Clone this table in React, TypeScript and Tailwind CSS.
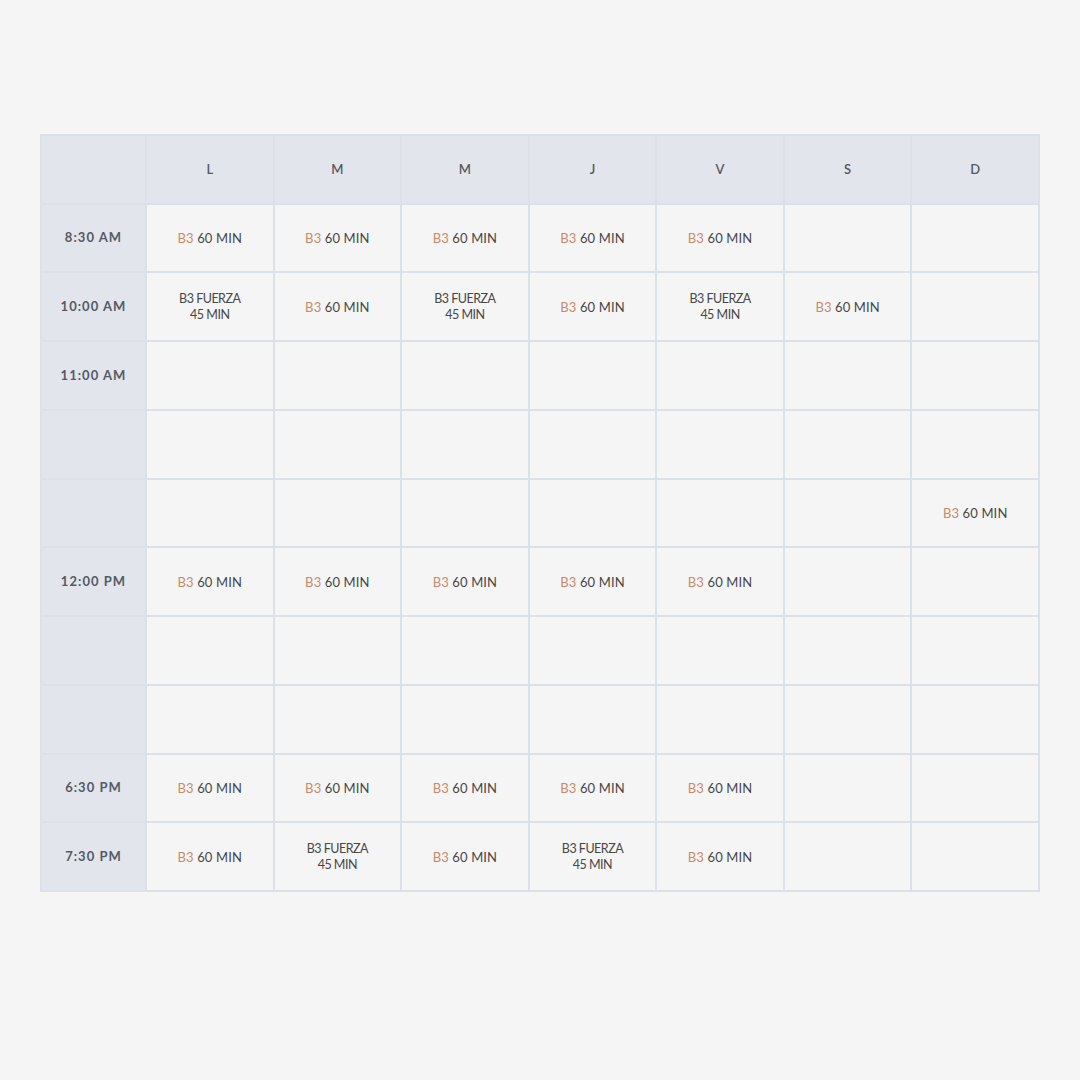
import React from "react";

type Slot = "60" | "F" | null;

const days = ["L", "M", "M", "J", "V", "S", "D"];

const rows: { time: string; slots: Slot[] }[] = [
  { time: "8:30 AM", slots: ["60", "60", "60", "60", "60", null, null] },
  { time: "10:00 AM", slots: ["F", "60", "F", "60", "F", "60", null] },
  { time: "11:00 AM", slots: [null, null, null, null, null, null, null] },
  { time: "", slots: [null, null, null, null, null, null, null] },
  { time: "", slots: [null, null, null, null, null, null, "60"] },
  { time: "12:00 PM", slots: ["60", "60", "60", "60", "60", null, null] },
  { time: "", slots: [null, null, null, null, null, null, null] },
  { time: "", slots: [null, null, null, null, null, null, null] },
  { time: "6:30 PM", slots: ["60", "60", "60", "60", "60", null, null] },
  { time: "7:30 PM", slots: ["60", "F", "60", "F", "60", null, null] },
];

function ClassCell({ slot }: { slot: Slot }) {
  return (
    <div className="flex items-center justify-center bg-[#f5f5f5] text-center text-[13px] leading-[16px] text-[#474747]">
      {slot === "60" && (
        <span className="tracking-[0.01em]">
          <span className="text-[#c98a6c]">B3</span> 60 MIN
        </span>
      )}
      {slot === "F" && (
        <span className="text-[12.5px] leading-[16px] tracking-[-0.04em]">
          B3 FUERZA
          <br />
          45 MIN
        </span>
      )}
    </div>
  );
}

export default function App() {
  return (
    <div
      className="min-h-screen bg-[#f5f5f5] pt-[134px]"
      style={{ fontFamily: "Lato, 'Noto Sans', sans-serif" }}
    >
      <div className="mx-auto grid h-[758px] w-[1000px] grid-cols-[103px_repeat(7,minmax(0,1fr))] grid-rows-[repeat(11,minmax(0,1fr))] gap-[2px] bg-[#dbe0e9] p-[2px]">
        <div className="bg-[#e2e5ec]" />
        {days.map((d, i) => (
          <div
            key={i}
            className="flex items-center justify-center bg-[#e2e5ec] text-[13px] font-semibold text-[#555a63]"
          >
            {d}
          </div>
        ))}
        {rows.map((r, ri) => (
          <React.Fragment key={ri}>
            <div className="flex items-center justify-center bg-[#e2e5ec] text-[13px] font-bold tracking-[0.08em] text-[#555a63]">
              {r.time}
            </div>
            {r.slots.map((s, si) => (
              <ClassCell key={si} slot={s} />
            ))}
          </React.Fragment>
        ))}
      </div>
    </div>
  );
}
